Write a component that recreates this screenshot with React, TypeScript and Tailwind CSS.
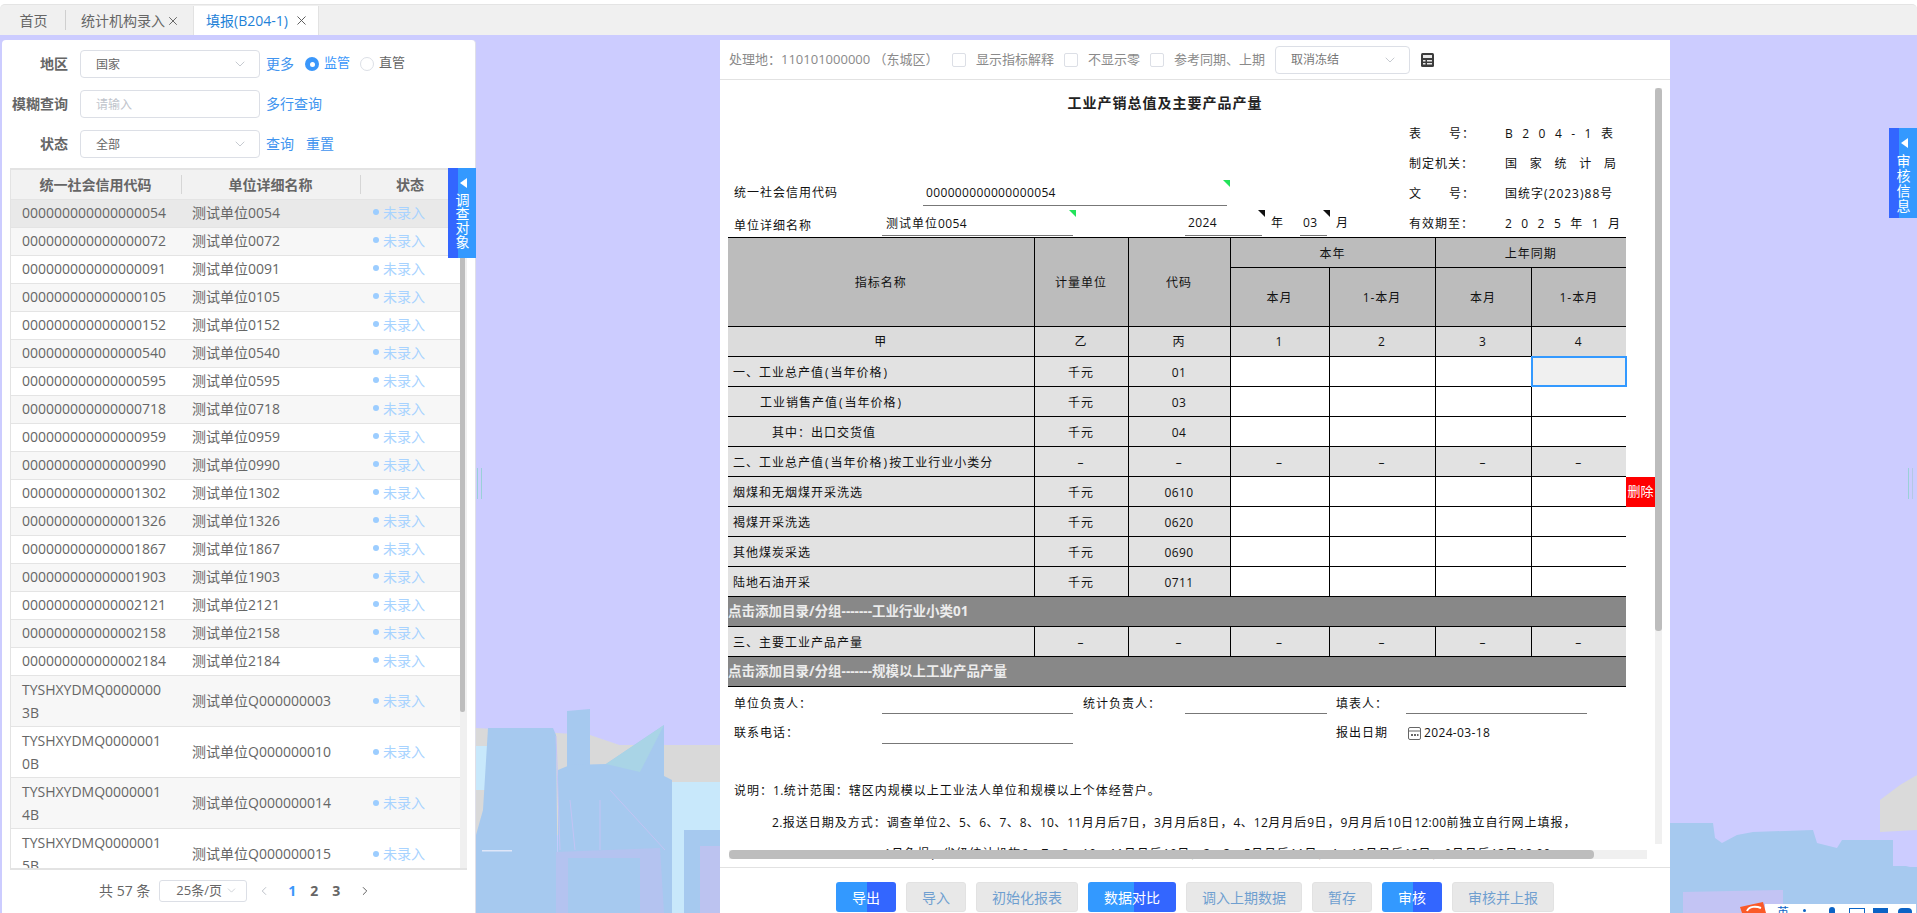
import { ChevronDown, ChevronLeft, ChevronRight, X } from "lucide-react";

const rows = [
  ["000000000000000054", "测试单位0054"],
  ["000000000000000072", "测试单位0072"],
  ["000000000000000091", "测试单位0091"],
  ["000000000000000105", "测试单位0105"],
  ["000000000000000152", "测试单位0152"],
  ["000000000000000540", "测试单位0540"],
  ["000000000000000595", "测试单位0595"],
  ["000000000000000718", "测试单位0718"],
  ["000000000000000959", "测试单位0959"],
  ["000000000000000990", "测试单位0990"],
  ["000000000000001302", "测试单位1302"],
  ["000000000000001326", "测试单位1326"],
  ["000000000000001867", "测试单位1867"],
  ["000000000000001903", "测试单位1903"],
  ["000000000000002121", "测试单位2121"],
  ["000000000000002158", "测试单位2158"],
  ["000000000000002184", "测试单位2184"],
];

const tallRows = [
  ["TYSHXYDMQ0000000", "3B", "测试单位Q000000003"],
  ["TYSHXYDMQ0000001", "0B", "测试单位Q000000010"],
  ["TYSHXYDMQ0000001", "4B", "测试单位Q000000014"],
  ["TYSHXYDMQ0000001", "5B", "测试单位Q000000015"],
];

const reportRows = [
  { name: "一、工业总产值(当年价格)", indent: "pl-[5px]", unit: "千元", code: "01" },
  { name: "工业销售产值(当年价格)", indent: "pl-[32px]", unit: "千元", code: "03" },
  { name: "其中：出口交货值", indent: "pl-[44px]", unit: "千元", code: "04" },
  { name: "二、工业总产值(当年价格)按工业行业小类分", indent: "pl-[5px]", unit: "–", code: "–", locked: true },
  { name: "烟煤和无烟煤开采洗选", indent: "pl-[5px]", unit: "千元", code: "0610" },
  { name: "褐煤开采洗选", indent: "pl-[5px]", unit: "千元", code: "0620" },
  { name: "其他煤炭采选", indent: "pl-[5px]", unit: "千元", code: "0690" },
  { name: "陆地石油开采", indent: "pl-[5px]", unit: "千元", code: "0711" },
];

const buttons = [
  { label: "导出", w: "w-[60px]", on: true },
  { label: "导入", w: "w-[60px]" },
  { label: "初始化报表", w: "w-[102px]" },
  { label: "数据对比", w: "w-[88px]", on: true },
  { label: "调入上期数据", w: "w-[116px]" },
  { label: "暂存", w: "w-[60px]" },
  { label: "审核", w: "w-[60px]", on: true },
  { label: "审核并上报", w: "w-[102px]" },
];

// digits are narrower than the CJK glyphs in the report's font
function Mixed({ text }: { text: string }) {
  return (
    <>
      {text.split(/([0-9:.\-]+|[()])/).map((part, i) =>
        i % 2 ? (
          <span key={i} className={part === "(" || part === ")" ? "px-[1px]" : "tracking-[0.35px]"}>
            {part}
          </span>
        ) : (
          <span key={i}>{part}</span>
        ),
      )}
    </>
  );
}

function Spread({ items, width }: { items: string[]; width: string }) {
  return (
    <span className={`flex ${width} justify-between tracking-normal`}>
      {items.map((c, i) => (
        <span key={i}>{c}</span>
      ))}
    </span>
  );
}

function Corner({ color, className }: { color: string; className: string }) {
  return (
    <svg width="7" height="7" viewBox="0 0 7 7" className={`absolute right-[-3px] ${className}`}>
      <path d="M0 0H7V7Z" fill={color} />
    </svg>
  );
}

function Select({ value, width }: { value: string; width: string }) {
  return (
    <div className={`flex h-[28px] ${width} items-center justify-between rounded-[4px] border border-[#dcdfe6] bg-white pl-[15px] pr-[11px] text-[12px] text-[#666]`}>
      <span className="pt-[2px]">{value}</span>
      <ChevronDown size={16} strokeWidth={1.2} className="text-[#b8bcc4]" />
    </div>
  );
}

function SideTab({ label, className, leading }: { label: string; className: string; leading: string }) {
  return (
    <div className={`absolute z-30 flex w-[28px] flex-col items-center bg-[linear-gradient(90deg,#3366ff_34%,#3399ff_34%)] text-white ${className}`}>
      <svg width="8" height="10" viewBox="0 0 8 10" className="mb-[5px] mt-[10px] ml-[3px]">
        <path d="M7 0V10L0 5Z" fill="#fff" />
      </svg>
      <div className={`ml-[1px] w-[14px] text-center text-[14px] ${leading}`}>{label}</div>
    </div>
  );
}

function Skyline() {
  return (
    <svg viewBox="0 0 1917 913" className="absolute inset-0 h-[913px] w-[1917px]">
      <path d="M476 728L590 735L640 752L668 750L720 768V835L476 835Z" fill="#d9d9d9" />
      <path d="M476 745H720V782L670 778L640 770L600 770L476 770Z" fill="#d9d9d9" />
      <path d="M476 746H500V790H476ZM668 782L720 782V913H640Z" fill="#c8e8fb" />
      <path d="M476 840H490V913H476Z" fill="#c8e8fb" />
      <path d="M488 728H553L556 735L558 913H476V835L483 810Z" fill="#a6c9ef" />
      <path d="M567 711L590 709V770H567Z" fill="#a6c9ef" />
      <path d="M558 770L570 765L606 764L664 725V776L672 780V913H558Z" fill="#a6c9ef" />
      <path d="M606 764L664 725L640 772Z" fill="#a9d4e6" />
      <path d="M556 852L660 848L664 913H556Z" fill="#b4c3f0" />
      <path d="M568 858H640V913H568Z" fill="#a6c9ef" />
      <path d="M684 830H720V913H684Z" fill="#a6c9ef" />
      <path d="M700 846H720V913H700Z" fill="#bcc3f0" />
      <path d="M610 790L665 850M600 800V850M570 800L575 850M556 736L560 850" stroke="#c3c4f4" strokeWidth="1" fill="none" />
      <path d="M482 850H512V851.5H482Z" fill="#dfe6f8" />
      <path d="M1880 800L1900 785L1917 775V830L1880 832Z" fill="#dadada" />
      <path d="M1670 823H1713L1715 838L1722 843L1737 835L1753 832L1813 830L1817 843L1837 848L1842 840H1893V863L1910 867H1917V913H1670Z" fill="#a6c9ef" />
      <path d="M1683 892L1783 890V913H1683Z" fill="#c3c4f4" />
      <path d="M1893 840H1917V866H1893Z" fill="#ccccff" />
    </svg>
  );
}

function Status() {
  return (
    <span className="flex items-center text-[14px] text-[#a8d3ff]">
      <span className="mr-[4px] h-[6px] w-[6px] rounded-full bg-[#9ccdff]" />
      未录入
    </span>
  );
}

export default function App() {
  return (
    <div className="relative h-[913px] w-[1917px] overflow-hidden bg-[#ccccff] font-['Open_Sans','Noto_Sans_CJK_SC',sans-serif]">
      <Skyline />

      {/* Tabs */}
      <div className="relative z-10 h-[35px] bg-white pt-[4px]">
        <div className="flex h-[31px] items-end rounded-t-[5px] border-t border-[#e4e4e4] bg-[#f0f0f0] pl-[2px]">
          <div className="flex h-[29px] w-[63px] items-center justify-center text-[14px] text-[#666]">首页</div>
          <div className="mb-[5px] h-[20px] w-px bg-[#cfcfcf]" />
          <div className="ml-[15px] flex h-[29px] w-[112px] items-center text-[14px] text-[#666]">
            统计机构录入
            <X size={14} strokeWidth={1.5} className="ml-[1px] text-[#555]" />
          </div>
          <div className="flex h-[29px] w-[126px] items-center border-x border-[#e2e2e2] bg-white pl-[12px] text-[14px] text-[#1f82d8]">
            <span className="w-[84px] overflow-hidden whitespace-nowrap">填报(B204-1)</span>
            <X size={15} strokeWidth={1.5} className="ml-[4px] text-[#555]" />
          </div>
        </div>
      </div>

      <div className="relative z-10 flex h-[878px] pl-[2px] pt-[5px]">
        {/* Left list panel */}
        <div className="relative flex w-[474px] flex-col rounded-t-[4px] border-r border-[#dfdfe8] bg-white">
          <div className="mt-[10px] flex h-[28px] items-center">
            <span className="w-[66px] pb-[2px] text-right text-[14px] font-bold text-[#666]">地区</span>
            <div className="ml-[12px]">
              <Select value="国家" width="w-[180px]" />
            </div>
            <span className="ml-[6px] pb-[2px] text-[14px] text-[#4094ef]">更多</span>
            <span className="ml-[11px] flex h-[14px] w-[14px] items-center justify-center rounded-full bg-[#3a97fb]">
              <span className="h-[5px] w-[5px] rounded-full bg-white" />
            </span>
            <span className="ml-[5px] pb-[2px] text-[13px] text-[#3a97fb]">监管</span>
            <span className="ml-[10px] h-[14px] w-[14px] rounded-full border border-[#dcdfe6]" />
            <span className="ml-[5px] pb-[2px] text-[13px] text-[#666]">直管</span>
          </div>
          <div className="mt-[12px] flex h-[28px] items-center">
            <span className="w-[66px] pb-[2px] text-right text-[14px] font-bold text-[#666]">模糊查询</span>
            <div className="ml-[12px] flex h-[28px] w-[180px] items-center rounded-[4px] border border-[#dcdfe6] pl-[15px] pt-[2px] text-[12px] text-[#c0c4cc]">请输入</div>
            <span className="ml-[6px] pb-[2px] text-[14px] text-[#4094ef]">多行查询</span>
          </div>
          <div className="mt-[12px] flex h-[28px] items-center">
            <span className="w-[66px] pb-[2px] text-right text-[14px] font-bold text-[#666]">状态</span>
            <div className="ml-[12px]">
              <Select value="全部" width="w-[180px]" />
            </div>
            <span className="ml-[6px] pb-[2px] text-[14px] text-[#4094ef]">查询</span>
            <span className="ml-[12px] pb-[2px] text-[14px] text-[#4094ef]">重置</span>
          </div>

          <div className="relative ml-[8px] mt-[10px] h-[702px] w-[457px] overflow-hidden border-y-2 border-l border-[#e3e3e3]">
            <table className="w-[450px] table-fixed border-collapse text-[14px] text-[#666]">
              <colgroup>
                <col className="w-[171px]" />
                <col className="w-[179px]" />
                <col className="w-[100px]" />
              </colgroup>
              <thead>
                <tr className="h-[29px] bg-[#f2f2f2] font-bold">
                  <th className="relative pr-[2px] text-center after:absolute after:right-0 after:top-[5px] after:h-[19px] after:w-px after:bg-[#d6d6d6]">统一社会信用代码</th>
                  <th className="relative pr-[2px] text-center after:absolute after:right-0 after:top-[5px] after:h-[19px] after:w-px after:bg-[#d6d6d6]">单位详细名称</th>
                  <th className="pr-[2px] text-center">状态</th>
                </tr>
              </thead>
              <tbody>
                {rows.map(([code, name], i) => (
                  <tr
                    key={code}
                    className={`h-[28px] border-t border-[#e4e4e4] ${i === 0 ? "bg-[#e9e9e9]" : i % 2 ? "bg-[#f7f7f7]" : "bg-white"}`}
                  >
                    <td className="pb-[2px] pl-[11px] whitespace-nowrap">{code}</td>
                    <td className="pb-[2px] pl-[10px]">{name}</td>
                    <td className="pb-[2px] pl-[12px]">
                      <Status />
                    </td>
                  </tr>
                ))}
                {tallRows.map(([a, b, name], i) => (
                  <tr key={name} className={`h-[51px] border-t border-[#e4e4e4] ${i % 2 ? "bg-white" : "bg-[#f7f7f7]"}`}>
                    <td className="pl-[11px] leading-[23px]">
                      {a}
                      <br />
                      {b}
                    </td>
                    <td className="pl-[10px] whitespace-nowrap">{name}</td>
                    <td className="pl-[12px]">
                      <Status />
                    </td>
                  </tr>
                ))}
              </tbody>
            </table>
            {/* list scrollbar */}
            <div className="absolute bottom-0 right-0 top-0 w-[7px] bg-[#f0f0f0]">
              <div className="h-[542px] w-[5px] rounded-b-[2px] bg-[#bdbdbd]" />
            </div>
          </div>

          <div className="flex flex-1 items-center pb-[2px] pl-[97px] text-[14px] text-[#666]">
            <span>共 57 条</span>
            <div className="ml-[9px] flex h-[22px] w-[88px] items-center justify-between rounded-[3px] border border-[#dcdfe6] pl-[16px] pr-[8px] text-[13px]">
              25条/页
              <ChevronDown size={13} strokeWidth={1.2} className="text-[#b8bcc4]" />
            </div>
            <ChevronLeft size={14} strokeWidth={1.6} className="ml-[10px] text-[#b8bcc4]" />
            <span className="ml-[17px] font-bold text-[#3a97fb]">1</span>
            <span className="ml-[14px] font-bold">2</span>
            <span className="ml-[14px] font-bold">3</span>
            <ChevronRight size={14} strokeWidth={1.6} className="ml-[18px] text-[#555]" />
          </div>

          <SideTab label="调查对象" className="left-[446px] top-[128px] h-[90px]" leading="leading-[14px]" />
        </div>

        {/* Drag handle */}
        <div className="ml-[1px] flex h-[31px] w-[5px] translate-y-[428px] justify-between">
          <span className="w-px bg-[#9ad0d8]" />
          <span className="w-px bg-[#9ad0d8]" />
        </div>

        {/* Report panel */}
        <div className="ml-[238px] flex w-[950px] flex-col bg-white">
          <div className="flex h-[40px] shrink-0 items-center border-b border-[#e2e2e2] pl-[9px] text-[13px] text-[#8a8a8a]">
            <span className="w-[223px] whitespace-nowrap">处理地：110101000000 （东城区）</span>
            <span className="h-[14px] w-[14px] rounded-[2px] border border-[#dcdfe6]" />
            <span className="ml-[10px] w-[88px]">显示指标解释</span>
            <span className="h-[14px] w-[14px] rounded-[2px] border border-[#dcdfe6]" />
            <span className="ml-[10px] w-[62px]">不显示零</span>
            <span className="h-[14px] w-[14px] rounded-[2px] border border-[#dcdfe6]" />
            <span className="ml-[10px] w-[101px] whitespace-nowrap">参考同期、上期</span>
            <div className="flex h-[28px] w-[135px] items-center justify-between rounded-[4px] border border-[#dcdfe6] pl-[15px] pr-[11px] text-[12px] text-[#777]">
              取消冻结
              <ChevronDown size={16} strokeWidth={1.2} className="text-[#b8bcc4]" />
            </div>
            <svg width="13" height="14" viewBox="0 0 13 14" className="ml-[11px]">
              <rect width="13" height="14" rx="1.5" fill="#3c3c3c" />
              <rect x="2" y="2" width="9" height="3" fill="#e8e8e8" />
              <path d="M2 7h2.5v1.5H2zM2 10h2.5v1.5H2zM6 7h5v1.5H6zM6 10h5v1.5H6z" fill="#e8e8e8" />
            </svg>
          </div>

          <div className="relative h-[787px] shrink-0 overflow-hidden">
            <div className="pl-[8px] text-[12px] tracking-[1px] text-[#111]">
              {/* Report head */}
              <div className="h-[157px]">
                <div className="h-[38px] w-[874px] pt-[14px] text-center text-[14px] leading-[18px] font-bold text-[#222]">
                  工业产销总值及主要产品产量
                </div>
                <div className="flex">
                  <div className="flex w-[681px] flex-col pl-[6px]">
                    <div className="h-[62px]" />
                    <div className="flex h-[26px] items-center">
                      <span className="w-[189px]">统一社会信用代码</span>
                      <div className="relative flex h-[26px] w-[304px] items-center border-b border-[#777] pl-[3px]">
                        <span className="tracking-[0.35px]">000000000000000054</span>
                        <Corner color="#22e35a" className="top-0" />
                      </div>
                    </div>
                    <div className="flex h-[30px] items-end">
                      <span className="mb-[1px] w-[148px]">单位详细名称</span>
                      <div className="relative flex h-[24px] w-[191px] items-center border-b border-[#777] pl-[4px]">
                        <Mixed text="测试单位0054" />
                        <Corner color="#22e35a" className="top-[-2px]" />
                      </div>
                      <div className="relative ml-[112px] flex h-[26px] w-[77px] items-center border-b border-[#777] pl-[3px] tracking-[0.35px]">
                        2024
                        <Corner color="#111" className="top-0" />
                      </div>
                      <span className="mb-[4px] ml-[9px]">年</span>
                      <div className="relative ml-[16px] flex h-[26px] w-[27px] items-center border-b border-[#777] pl-[3px] tracking-[0.35px]">
                        03
                        <Corner color="#111" className="top-0" />
                      </div>
                      <span className="mb-[4px] ml-[9px]">月</span>
                    </div>
                  </div>
                  <div className="pt-[1px] leading-[30px]">
                    <div className="flex">
                      <span className="flex w-[96px]">
                        <span className="w-[40px]">表</span>号：
                      </span>
                      <Spread items={["B", "2", "0", "4", "-", "1", "表"]} width="w-[108px]" />
                    </div>
                    <div className="flex">
                      <span className="w-[96px]">制定机关：</span>
                      <Spread items={["国", "家", "统", "计", "局"]} width="w-[111px]" />
                    </div>
                    <div className="flex">
                      <span className="flex w-[96px]">
                        <span className="w-[40px]">文</span>号：
                      </span>
                      <span>国统字(2023)88号</span>
                    </div>
                    <div className="flex">
                      <span className="w-[96px]">有效期至：</span>
                      <Spread items={["2", "0", "2", "5", "年", "1", "月"]} width="w-[115px]" />
                    </div>
                  </div>
                </div>
              </div>

              {/* Report table */}
              <table className="w-[898px] table-fixed border-collapse border-y border-black">
                <colgroup>
                  <col className="w-[306px]" />
                  <col className="w-[94px]" />
                  <col className="w-[102px]" />
                  <col className="w-[99px]" />
                  <col className="w-[106px]" />
                  <col className="w-[96px]" />
                  <col className="w-[95px]" />
                </colgroup>
                <thead className="bg-[#bcbcbc] text-center font-normal">
                  <tr className="h-[30px]">
                    <th rowSpan={2} className="border-r border-black pt-[2px] font-normal">指标名称</th>
                    <th rowSpan={2} className="border-r border-black pt-[2px] font-normal">计量单位</th>
                    <th rowSpan={2} className="border-r border-black pt-[2px] font-normal">代码</th>
                    <th colSpan={2} className="border-r border-b border-black pt-[2px] font-normal">本年</th>
                    <th colSpan={2} className="border-b border-black pt-[2px] font-normal">上年同期</th>
                  </tr>
                  <tr className="h-[59px]">
                    <th className="border-r border-black pt-[2px] font-normal">本月</th>
                    <th className="border-r border-black pt-[2px] font-normal">1-本月</th>
                    <th className="border-r border-black pt-[2px] font-normal">本月</th>
                    <th className="pt-[2px] font-normal">1-本月</th>
                  </tr>
                </thead>
                <tbody className="text-center">
                  <tr className="h-[30px] border-y border-black bg-[#dcdcdc]">
                    <td className="border-r border-black">甲</td>
                    <td className="border-r border-black">乙</td>
                    <td className="border-r border-black">丙</td>
                    <td className="border-r border-black">1</td>
                    <td className="border-r border-black">2</td>
                    <td className="border-r border-black">3</td>
                    <td>4</td>
                  </tr>
                  {reportRows.map((r, i) => (
                    <tr key={r.name} className="h-[30px] border-b border-black">
                      <td className={`border-r border-black bg-[#e2e2e2] pt-[2px] text-left ${r.indent}`}>
                        <Mixed text={r.name} />
                      </td>
                      <td className="border-r border-black bg-[#e2e2e2] pt-[2px]">{r.unit}</td>
                      <td className="border-r border-black bg-[#e2e2e2] pt-[2px] tracking-[0.35px]">{r.code}</td>
                      {[0, 1, 2, 3].map((c) => (
                        <td
                          key={c}
                          className={`relative pt-[2px] ${c < 3 ? "border-r border-black" : ""} ${r.locked ? "bg-[#e2e2e2]" : ""} ${
                            i === 0 && c === 3 ? "bg-[#f0f0f0]" : ""
                          }`}
                        >
                          {r.locked ? "–" : ""}
                          {i === 0 && c === 3 && <div className="absolute -inset-px border-2 border-[#3399ff]" />}
                        </td>
                      ))}
                    </tr>
                  ))}
                  <tr className="h-[30px] border-b border-black bg-[#888]">
                    <td colSpan={7} className="text-left text-[13.5px] font-bold tracking-normal text-[#ececec]">
                      点击添加目录/分组-------工业行业小类01
                    </td>
                  </tr>
                  <tr className="h-[30px] border-b border-black bg-[#e2e2e2]">
                    <td className="border-r border-black pl-[5px] pt-[2px] text-left">三、主要工业产品产量</td>
                    <td className="border-r border-black pt-[2px]">–</td>
                    <td className="border-r border-black pt-[2px]">–</td>
                    <td className="border-r border-black pt-[2px]">–</td>
                    <td className="border-r border-black pt-[2px]">–</td>
                    <td className="border-r border-black pt-[2px]">–</td>
                    <td className="pt-[2px]">–</td>
                  </tr>
                  <tr className="h-[30px] bg-[#888]">
                    <td colSpan={7} className="text-left text-[13.5px] font-bold tracking-normal text-[#ececec]">
                      点击添加目录/分组-------规模以上工业产品产量
                    </td>
                  </tr>
                </tbody>
              </table>

              {/* Sign-off rows */}
              <div className="flex h-[27px] pl-[6px]">
                <span className="w-[148px] pt-[8px] leading-[18px]">单位负责人：</span>
                <span className="w-[191px] border-b border-[#777]" />
                <span className="ml-[10px] w-[102px] pt-[8px] leading-[18px]">统计负责人：</span>
                <span className="w-[142px] border-b border-[#777]" />
                <span className="ml-[9px] w-[70px] pt-[8px] leading-[18px]">填表人：</span>
                <span className="w-[181px] border-b border-[#777]" />
              </div>
              <div className="mt-[3px] flex h-[27px] pl-[6px]">
                <span className="w-[148px] pt-[7px] leading-[18px]">联系电话：</span>
                <span className="w-[191px] border-b border-[#777]" />
                <span className="ml-[263px] w-[72px] pt-[7px] leading-[18px]">报出日期</span>
                <div className="flex items-start pt-[7px] leading-[18px]">
                  <svg width="13" height="14" viewBox="0 0 13 14" className="mt-[2px]">
                    <rect x="0.5" y="1.5" width="12" height="12" rx="1.5" fill="none" stroke="#666" />
                    <path d="M1 5H12" stroke="#666" />
                    <path d="M3 8h2v2H3zM6 8h2v2H6zM9 8h1.5v2H9z" fill="#666" />
                  </svg>
                  <span className="ml-[3px] tracking-[0.35px]">2024-03-18</span>
                </div>
              </div>

              <div className="mt-[31px] pl-[6px] leading-[32px] whitespace-nowrap">
                <Mixed text="说明：1.统计范围：辖区内规模以上工业法人单位和规模以上个体经营户。" />
              </div>
              <div className="pl-[44px] leading-[32px] whitespace-nowrap">
                <Mixed text="2.报送日期及方式：调查单位2、5、6、7、8、10、11月月后7日，3月月后8日，4、12月月后9日，9月月后10日12:00前独立自行网上填报，" />
              </div>
              <div className="pl-[156px] leading-[30px] whitespace-nowrap">
                <Mixed text="1月免报；省级统计机构6、7、8、10、11月月后10日，2、3、5月月后11日，4、12月月后12日，9月月后13日12:00" />
              </div>
            </div>

            {/* Delete button overlays the row edge */}
            <div className="absolute left-[906px] top-[397px] flex h-[30px] w-[36px] items-center bg-[#999]/60">
              <div className="flex h-[30px] w-[29px] items-center justify-center bg-[#ff0000] text-[13px] text-white">删除</div>
            </div>

            {/* Report scrollbars */}
            <div className="absolute right-[8px] top-[8px] h-[756px] w-[7px] bg-[#f0f0f0]">
              <div className="h-[543px] rounded-[3px] bg-[#bdbdbd]" />
            </div>
            <div className="absolute bottom-[8px] left-[9px] h-[9px] w-[918px] bg-[#f0f0f0]">
              <div className="h-[9px] w-[865px] rounded-[4px] bg-[#bdbdbd]" />
            </div>
          </div>

          {/* Actions */}
          <div className="flex flex-1 gap-[10px] border-t border-[#e2e2e2] pl-[116px] pt-[14px]">
            {buttons.map((b) => (
              <div
                key={b.label}
                className={`flex h-[30px] ${b.w} items-center justify-center rounded-[3px] text-[14px] ${
                  b.on
                    ? "bg-[linear-gradient(90deg,#3399ff_52%,#3366ff_52%)] text-white"
                    : "border border-[#e2e2e2] bg-[#e8e8e8] text-[#6f9fd0]"
                }`}
              >
                {b.label}
              </div>
            ))}
          </div>
        </div>

        {/* Right edge handle */}
        <div className="ml-[238px] flex h-[31px] w-[5px] translate-y-[428px] justify-between">
          <span className="w-px bg-[#9ad0d8]" />
          <span className="w-px bg-[#b5c8e6]" />
        </div>
      </div>

      <SideTab label="审核信息" className="left-[1889px] top-[128px] h-[90px]" leading="leading-[15px]" />

      {/* Input method bar at the corner of the screen */}
      <div className="absolute bottom-0 right-[1px] z-30 flex h-[9px] w-[151px] items-start overflow-hidden bg-white pl-[12px] pt-[3px] text-[12px] leading-[12px] text-[#0b63c5]">
        <span>英</span>
        <span className="ml-[14px] mt-[2px] h-[3px] w-[3px] rounded-full bg-[#0b63c5]" />
        <span className="ml-[23px] h-[8px] w-[6px] rounded-full bg-[#0b63c5]" />
        <span className="ml-[14px] mt-[1px] h-[8px] w-[16px] border border-[#0b63c5]" />
        <span className="ml-[8px] mt-[1px] h-[8px] w-[15px] bg-[#0b63c5]" />
        <span className="ml-[10px] mt-[1px] h-[8px] w-[14px] rounded-full bg-[#0b63c5]" />
      </div>
      <svg width="28" height="11" viewBox="0 0 28 11" className="absolute bottom-0 left-[1739px] z-30">
        <path d="M1 5L24 0L27 11H3Z" fill="#fa5a28" />
        <path d="M8 9C10 4 17 4 22 6" fill="none" stroke="#fff" strokeWidth="2" />
      </svg>
    </div>
  );
}
